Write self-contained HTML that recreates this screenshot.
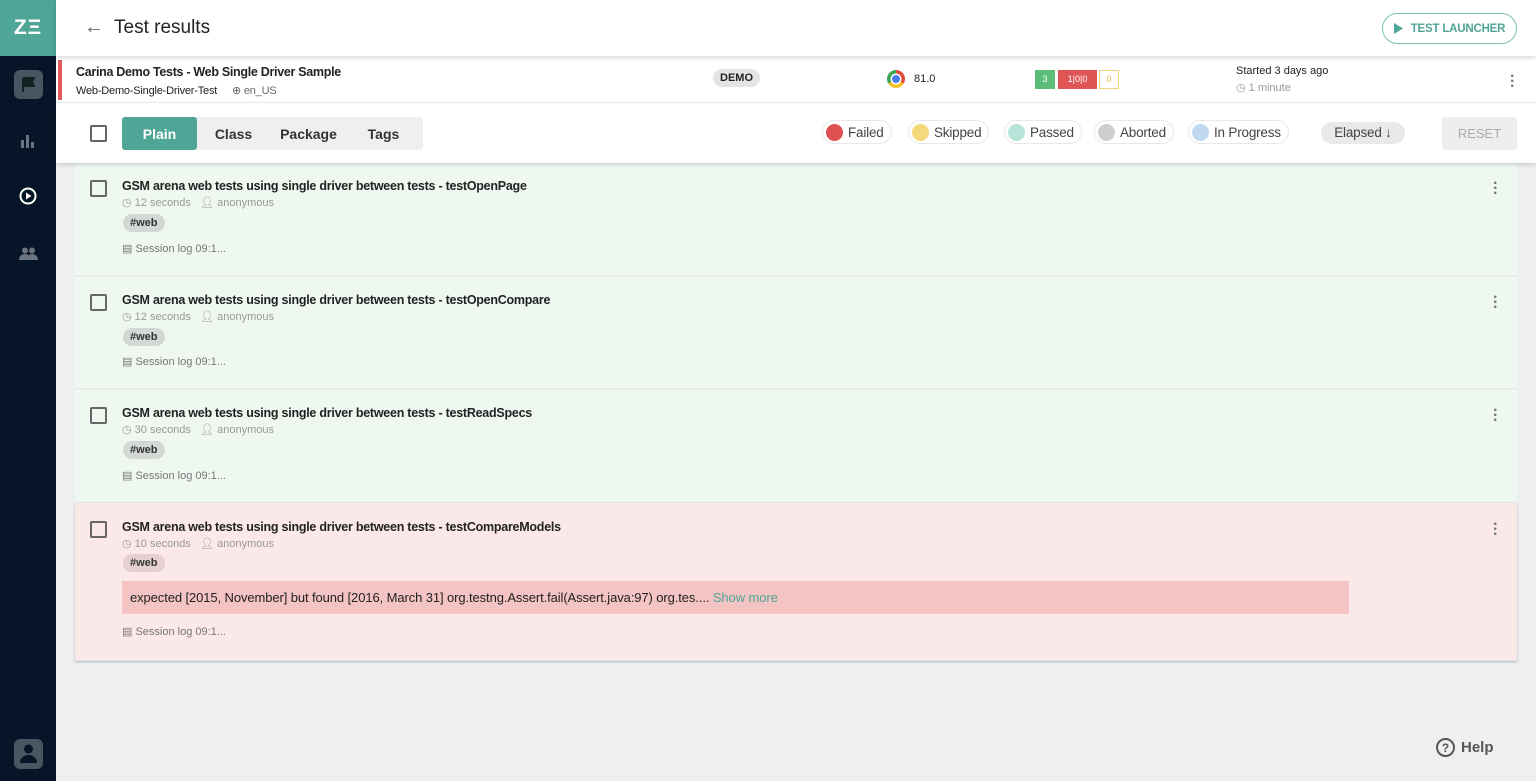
<!DOCTYPE html>
<html><head><style>
*{box-sizing:border-box;margin:0;padding:0}
body{width:1536px;height:781px;overflow:hidden;background:#eeeff1;font-family:"Liberation Sans",sans-serif;position:relative;color:#222}
.abs{position:absolute}
.side{left:0;top:0;width:56px;height:781px;background:#061628}
.logo{left:0;top:0;width:56px;height:56px;background:#4fa596;color:#fff;font-weight:bold;font-size:21px;display:flex;align-items:center;justify-content:center;letter-spacing:1px}
.hdr{left:56px;top:0;width:1480px;height:56px;background:#fff;box-shadow:0 2px 4px rgba(0,0,0,.15);z-index:3}
.run{left:56px;top:56px;width:1480px;height:47px;background:#fff;border-bottom:1px solid #eee;z-index:2}
.flt{left:56px;top:103px;width:1480px;height:60px;background:#fff;box-shadow:0 2px 4px rgba(0,0,0,.15);z-index:2}
.cb{width:17px;height:17px;border:2px solid #666;border-radius:2px}
.pill{display:flex;align-items:center;height:24px;border:1px solid #e8e8e8;border-radius:12px;padding:0 7px 0 3px;font-size:13.5px;color:#444;top:120px;letter-spacing:-.2px}
.dot{width:17px;height:17px;border-radius:50%;margin-right:5px}
.row{left:75px;width:1442px;border-bottom:1px solid #e2e8e4}
.g{background:#eef8f0}.r{background:#fbe8e8}
.t{font-size:12.5px;font-weight:bold;color:#222;letter-spacing:-.25px}
.m{font-size:11px;color:#999}
.tag{background:#d4d8d4;border-radius:10px;font-size:11px;font-weight:bold;padding:3px 7px;color:#333}
.kb{right:20px;color:#777;font-size:16px;font-weight:bold;line-height:5px;width:4px}
</style></head><body>
<div class="abs side"></div>
<div class="abs logo">ZΞ</div>
<div class="abs" style="left:14px;top:70px;width:29px;height:29px;background:#4a5562;border-radius:6px"><svg width="29" height="29"><path d="M9 8v14M9 8h11l-2 4 2 4H9" fill="#122" stroke="#122" stroke-width="2"/></svg></div>
<svg class="abs" style="left:20px;top:133px" width="16" height="16"><rect x="1" y="7" width="3" height="8" fill="#6b7480"/><rect x="6" y="2" width="3" height="13" fill="#6b7480"/><rect x="11" y="9" width="3" height="6" fill="#6b7480"/></svg>
<svg class="abs" style="left:19px;top:187px" width="18" height="18"><circle cx="9" cy="9" r="7.5" fill="none" stroke="#fff" stroke-width="2"/><path d="M7 5.5v7l5.5-3.5z" fill="#fff"/></svg>
<svg class="abs" style="left:19px;top:247px" width="19" height="14"><circle cx="6" cy="3.5" r="3" fill="#6b7480"/><circle cx="13" cy="3.5" r="3" fill="#6b7480"/><path d="M0 13c0-4 3-6 6-6s6 2 6 6zM8 13c0-3 2-6 5-6s6 2 6 6z" fill="#6b7480"/></svg>
<div class="abs" style="left:14px;top:739px;width:29px;height:30px;background:#4a5562;border-radius:6px"><svg width="29" height="30"><circle cx="14.5" cy="10" r="4.5" fill="#061628"/><path d="M6 24c0-5 4-8 8.5-8s8.5 3 8.5 8z" fill="#061628"/></svg></div>

<div class="abs hdr">
 <div class="abs" style="left:28px;top:16px;font-size:20px;color:#666">←</div>
 <div class="abs" style="left:58px;top:17px;font-size:19px;color:#222">Test results</div>
 <div class="abs" style="left:1326px;top:13px;width:135px;height:31px;border:1px solid #7cc0b4;border-radius:16px;color:#4fa596;font-size:11.5px;font-weight:bold;display:flex;align-items:center;justify-content:center;gap:8px;letter-spacing:-.2px"><svg width="9" height="11"><path d="M0 0v11l9-5.5z" fill="#4fa596"/></svg>TEST LAUNCHER</div>
</div>
<div class="abs run">
 <div class="abs" style="left:2px;top:4px;width:4px;height:40px;background:#e05a5a"></div>
 <div class="abs" style="left:20px;top:9px;font-size:12.5px;font-weight:bold;letter-spacing:-.3px">Carina Demo Tests - Web Single Driver Sample</div>
 <div class="abs" style="left:20px;top:28px;font-size:11px;letter-spacing:-.2px">Web-Demo-Single-Driver-Test <span style="color:#666;margin-left:12px">⊕ en_US</span></div>
 <div class="abs" style="left:657px;top:13px;background:#e4e4e4;border-radius:10px;padding:3px 7px;font-size:11px;font-weight:bold">DEMO</div>
 <div class="abs" style="left:831px;top:14px;width:18px;height:18px;border-radius:50%;background:conic-gradient(#e04a3c 0 120deg,#f6c12d 120deg 240deg,#3aa757 240deg);"><div style="margin:5px;width:8px;height:8px;border-radius:50%;background:#4b7fe6;box-shadow:0 0 0 1.5px #fff"></div></div>
 <div class="abs" style="left:858px;top:17px;font-size:11px">81.0</div>
 <div class="abs" style="left:979px;top:14px;width:20px;height:19px;background:#5bbd77;color:#fff;font-size:9px;text-align:center;line-height:19px">3</div>
 <div class="abs" style="left:1002px;top:14px;width:39px;height:19px;background:#df5555;color:#fff;font-size:9px;text-align:center;line-height:19px">1|0|0</div>
 <div class="abs" style="left:1043px;top:14px;width:20px;height:19px;border:1px solid #f4d27a;color:#e8b840;font-size:9px;text-align:center;line-height:17px">0</div>
 <div class="abs" style="left:1180px;top:9px;font-size:11px">Started 3 days ago</div>
 <div class="abs" style="left:1180px;top:25px;font-size:11px;color:#999">◷ 1 minute</div>
 <div class="abs kb" style="top:18px;right:22px">·<br>·<br>·</div>
</div>
<div class="abs flt">
 <div class="abs cb" style="left:34px;top:22px"></div>
 <div class="abs" style="left:66px;top:14px;width:301px;height:33px;background:#eeeff1;border-radius:3px;display:flex;font-size:14px;font-weight:bold;color:#333;align-items:center">
  <div style="width:75px;height:33px;background:#4fa596;color:#fff;border-radius:3px;display:flex;align-items:center;justify-content:center">Plain</div>
  <div style="width:73px;text-align:center">Class</div><div style="width:77px;text-align:center">Package</div><div style="width:73px;text-align:center">Tags</div>
 </div>
</div>
<div class="abs pill" style="left:822px;z-index:4"><div class="dot" style="background:#df5151"></div>Failed</div>
<div class="abs pill" style="left:908px;z-index:4"><div class="dot" style="background:#f6d87d"></div>Skipped</div>
<div class="abs pill" style="left:1004px;z-index:4"><div class="dot" style="background:#b8e3d9"></div>Passed</div>
<div class="abs pill" style="left:1094px;z-index:4"><div class="dot" style="background:#cfcfcf"></div>Aborted</div>
<div class="abs pill" style="left:1188px;z-index:4"><div class="dot" style="background:#c0d9f1"></div>In Progress</div>
<div class="abs" style="left:1321px;top:122px;width:84px;height:22px;background:#e8e9ea;border-radius:11px;font-size:13.5px;color:#444;text-align:center;line-height:22px;z-index:4;letter-spacing:-.2px">Elapsed ↓</div>
<div class="abs" style="left:1442px;top:117px;width:75px;height:33px;background:#eeeeee;border-radius:3px;font-size:13px;color:#aaa;text-align:center;line-height:33px;z-index:4">RESET</div>

<div class="abs row g" style="top:164px;height:112px">
 <div class="abs cb" style="left:15px;top:16px"></div>
 <div class="abs t" style="left:47px;top:15px">GSM arena web tests using single driver between tests - testOpenPage</div>
 <div class="abs m" style="left:47px;top:32px">◷ 12 seconds &nbsp; 👤︎ anonymous</div>
 <div class="abs tag" style="left:48px;top:50px">#web</div>
 <div class="abs m" style="left:47px;top:78px;color:#777">▤ Session log 09:1...</div>
 <div class="abs kb" style="top:17px">·<br>·<br>·</div>
</div>
<div class="abs row g" style="top:277px;height:112px">
 <div class="abs cb" style="left:15px;top:17px"></div>
 <div class="abs t" style="left:47px;top:16px">GSM arena web tests using single driver between tests - testOpenCompare</div>
 <div class="abs m" style="left:47px;top:33px">◷ 12 seconds &nbsp; 👤︎ anonymous</div>
 <div class="abs tag" style="left:48px;top:51px">#web</div>
 <div class="abs m" style="left:47px;top:78px;color:#777">▤ Session log 09:1...</div>
 <div class="abs kb" style="top:18px">·<br>·<br>·</div>
</div>
<div class="abs row g" style="top:390px;height:113px">
 <div class="abs cb" style="left:15px;top:17px"></div>
 <div class="abs t" style="left:47px;top:16px">GSM arena web tests using single driver between tests - testReadSpecs</div>
 <div class="abs m" style="left:47px;top:33px">◷ 30 seconds &nbsp; 👤︎ anonymous</div>
 <div class="abs tag" style="left:48px;top:51px">#web</div>
 <div class="abs m" style="left:47px;top:79px;color:#777">▤ Session log 09:1...</div>
 <div class="abs kb" style="top:18px">·<br>·<br>·</div>
</div>
<div class="abs row r" style="top:503px;height:158px;box-shadow:0 1px 2px rgba(0,0,0,.25)">
 <div class="abs cb" style="left:15px;top:18px"></div>
 <div class="abs t" style="left:47px;top:17px">GSM arena web tests using single driver between tests - testCompareModels</div>
 <div class="abs m" style="left:47px;top:34px">◷ 10 seconds &nbsp; 👤︎ anonymous</div>
 <div class="abs tag" style="left:48px;top:51px;background:#e4d0d0">#web</div>
 <div class="abs" style="left:47px;top:78px;width:1227px;height:33px;background:#f4c3c3;font-size:13px;line-height:33px;padding-left:8px;color:#222;letter-spacing:-.1px">expected [2015, November] but found [2016, March 31] org.testng.Assert.fail(Assert.java:97) org.tes.... <span style="color:#4fa596">Show more</span></div>
 <div class="abs m" style="left:47px;top:122px;color:#777">▤ Session log 09:1...</div>
 <div class="abs kb" style="top:19px">·<br>·<br>·</div>
</div>
<div class="abs" style="left:1436px;top:738px;font-size:15px;font-weight:bold;color:#555;display:flex;align-items:center;gap:6px"><span style="width:19px;height:19px;border:2px solid #555;border-radius:50%;font-size:12px;display:inline-flex;align-items:center;justify-content:center">?</span>Help</div>
</body></html>
